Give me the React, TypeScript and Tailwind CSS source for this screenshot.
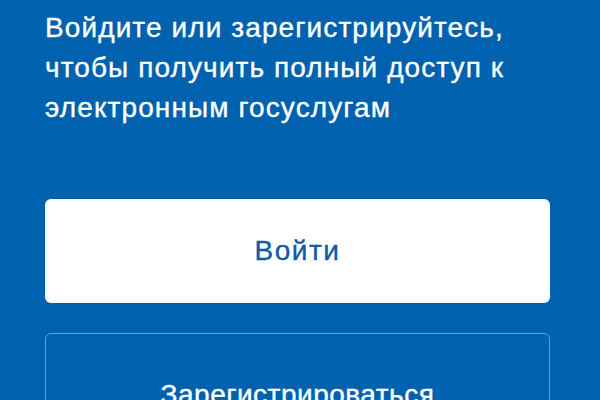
export default function App() {
  return (
    <div
      className="w-[600px] h-[400px] overflow-hidden bg-[#0062ae] px-[45px] pt-[8px] [-webkit-text-stroke:0.35px_currentColor]"
      style={{ fontFamily: '"Liberation Sans", Arial, sans-serif' }}
    >
      <p className="text-[28px] leading-[40px] tracking-[1.1px] text-white">
        Войдите или зарегистрируйтесь,
        <br />
        чтобы получить полный доступ к
        <br />
        электронным госуслугам
      </p>

      <div className="mt-[71px] flex flex-col gap-[30px]">
        <button className="h-[104px] w-[505px] rounded-[6px] bg-white text-[28px] tracking-[1.5px] text-[#0d5aa7]">
          Войти
        </button>
        <button className="h-[124px] w-[505px] rounded-[6px] border border-[#6a9fd6] text-[28px] tracking-[0.5px] text-white">
          Зарегистрироваться
        </button>
      </div>
    </div>
  )
}
